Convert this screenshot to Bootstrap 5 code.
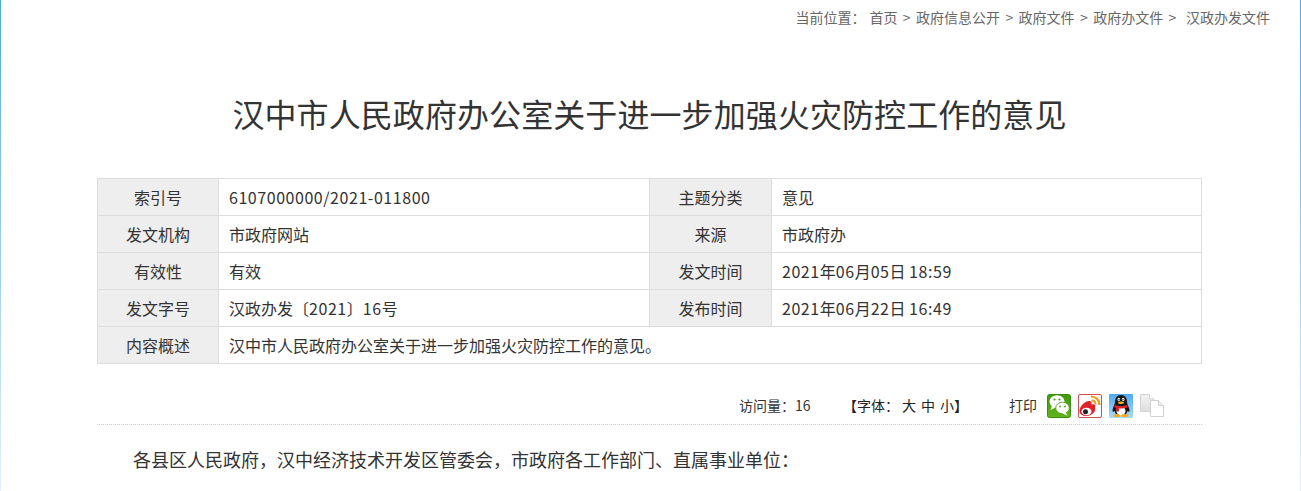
<!DOCTYPE html>
<html lang="zh-CN">
<head>
<meta charset="utf-8">
<title>汉中市人民政府办公室关于进一步加强火灾防控工作的意见</title>
<link href="https://cdn.jsdelivr.net/npm/bootstrap@5.3.0/dist/css/bootstrap.min.css" rel="stylesheet">
<style>
html,body{height:100%;overflow:hidden}
body{font-family:"Noto Sans CJK SC","Liberation Sans",sans-serif;color:#333;background:#fff}
.page-frame{height:491px;border-style:solid;border-width:0 1px;border-image:linear-gradient(#4aa8f2,#e4f2fc) 1;overflow:hidden}
.crumbs{height:35px;padding:5px 30px 0 0;font-size:14px;line-height:24px;color:#666}
.crumbs .sep{margin:0 5.4px}
.crumbs .here{margin-right:4px}
.crumbs .last{margin-left:4.300px}
.doc-title{font-size:32px;line-height:48px;font-weight:400;color:#333;margin:54px 2px 41px 0;text-align:center;letter-spacing:.08px}
.doc-wrap{width:1105px;margin-left:96px}
.meta-table{table-layout:fixed;width:1105px;margin:0;font-size:16px;--bs-table-color:#333;--bs-table-border-color:#ddd}
.meta-table td{height:37px;padding:0 10px;line-height:36px;border:1px solid #ddd;vertical-align:middle}
.meta-table td.lab{background:#eee;--bs-table-bg:#eee;text-align:center}
.meta-table .num{letter-spacing:.55px}
.meta-table .w-col1{width:121px}
.meta-table .w-col2{width:431px}
.meta-table .w-col3{width:122px}
.tools{height:61px;padding-top:30px;border-bottom:1px dotted #ccc;font-size:14px;line-height:22px;color:#333}
.t-visits{margin-left:642px;width:104px}
.t-font{width:166px;color:#222;white-space:nowrap}
.t-font .size-opt{margin-left:5px}
.t-font .size-opt:first-of-type{margin-left:3px}
.t-print{width:38px}
.tool-icons{gap:7px}
.tool-icons svg{display:block}
.doc-body{font-size:18px;line-height:32px;margin:18px 0 0;padding-left:36px;color:#333}
</style>
</head>
<body>
<div class="page-frame">
  <div class="crumbs d-flex justify-content-end">
    <span class="here">当前位置：</span><span>首页</span><span class="sep">&gt;</span><span>政府信息公开</span><span class="sep">&gt;</span><span>政府文件</span><span class="sep">&gt;</span><span>政府办文件</span><span class="sep">&gt;</span><span class="last">汉政办发文件</span>
  </div>
  <h1 class="doc-title">汉中市人民政府办公室关于进一步加强火灾防控工作的意见</h1>
  <div class="doc-wrap">
    <table class="table meta-table">
      <colgroup><col class="w-col1"><col class="w-col2"><col class="w-col3"><col></colgroup>
      <tbody>
        <tr><td class="lab">索引号</td><td><span class="num">6107000000/2021-011800</span></td><td class="lab">主题分类</td><td>意见</td></tr>
        <tr><td class="lab">发文机构</td><td>市政府网站</td><td class="lab">来源</td><td>市政府办</td></tr>
        <tr><td class="lab">有效性</td><td>有效</td><td class="lab">发文时间</td><td><span class="num">2021</span>年<span class="num">06</span>月<span class="num">05</span>日 <span class="num">18:59</span></td></tr>
        <tr><td class="lab">发文字号</td><td>汉政办发〔<span class="num">2021</span>〕<span class="num">16</span>号</td><td class="lab">发布时间</td><td><span class="num">2021</span>年<span class="num">06</span>月<span class="num">22</span>日 <span class="num">16:49</span></td></tr>
        <tr><td class="lab">内容概述</td><td colspan="3">汉中市人民政府办公室关于进一步加强火灾防控工作的意见。</td></tr>
      </tbody>
    </table>
    <div class="tools d-flex align-items-start">
      <span class="t-visits">访问量：16</span>
      <span class="t-font">【字体：<span class="size-opt">大</span><span class="size-opt">中</span><span class="size-opt">小</span>】</span>
      <span class="t-print">打印</span>
      <div class="tool-icons d-flex">
        <svg width="24" height="24" viewBox="0 0 24 24"><defs><linearGradient id="wg" x1="0" y1="0" x2="0" y2="1"><stop offset="0" stop-color="#3f9a0c"/><stop offset="1" stop-color="#62b41e"/></linearGradient></defs><rect x=".5" y=".5" width="23" height="23" rx="2" fill="url(#wg)" stroke="#3b8d0c"/><ellipse cx="10" cy="7.500" rx="7.500" ry="6.300" fill="#fff"/><path d="M5 11.500l-1.500 4.500 5-2.500z" fill="#fff"/><ellipse cx="15.500" cy="14" rx="6.800" ry="5.800" fill="#fff" stroke="#4a9f12" stroke-width=".8"/><path d="M18.500 18l2 3.500-5-2z" fill="#fff"/><circle cx="7.500" cy="5.500" r="1.100" fill="#4a9f12"/><circle cx="12.500" cy="5.500" r="1.100" fill="#4a9f12"/><circle cx="13" cy="12.500" r=".9" fill="#4a9f12"/><circle cx="18" cy="12.500" r=".9" fill="#4a9f12"/></svg>
        <svg width="24" height="24" viewBox="0 0 24 24"><rect x=".5" y=".5" width="23" height="23" rx="1.500" fill="#fff" stroke="#d4504c"/><path d="M1.500 17c0-4.500 5.500-10 9.500-10 2.500 0 3 1.800 2.300 3.600 3-1 5 .3 3.700 2.900 1.500 4-3.500 8.500-8.500 8.500-4 0-7-2-7-5z" fill="#e2202b"/><ellipse cx="8.500" cy="17.500" rx="5" ry="3.800" fill="#fff"/><circle cx="7.500" cy="17.800" r="2.500" fill="#222"/><path d="M13 2.500c5 0 8.500 3.500 8.500 8.500" fill="none" stroke="#f39a1d" stroke-width="2.200"/><path d="M13.500 6.500c2.500 0 4 1.500 4 4" fill="none" stroke="#f39a1d" stroke-width="2"/></svg>
        <svg width="24" height="24" viewBox="0 0 24 24"><defs><linearGradient id="qg" x1="0" y1="0" x2="0" y2="1"><stop offset="0" stop-color="#4fa9ec"/><stop offset="1" stop-color="#a9dcf8"/></linearGradient></defs><rect width="24" height="24" rx="1" fill="url(#qg)"/><path d="M12 1c4 0 6 3 6 7 0 2 2 5 2.500 8 .3 2-1 2-2 1-.5 2-1.500 3-2.500 4H8c-1-1-2-2-2.500-4-1 1-2.300 1-2-1C4 13 6 10 6 8c0-4 2-7 6-7z" fill="#161616"/><ellipse cx="12" cy="17" rx="4.500" ry="4.500" fill="#fff"/><ellipse cx="9.800" cy="5.500" rx="1.300" ry="1.800" fill="#fff"/><ellipse cx="14.200" cy="5.500" rx="1.300" ry="1.800" fill="#fff"/><circle cx="10" cy="5.800" r=".7" fill="#111"/><circle cx="14" cy="5.800" r=".7" fill="#111"/><ellipse cx="12" cy="8.800" rx="3" ry="1.300" fill="#f6b71e"/><path d="M5.500 11c4 1.500 9 1.500 13 0v2.500c-4 1.300-9 1.300-13 0z" fill="#e2202b"/><path d="M7 13h3v4.500H7.500z" fill="#e2202b"/><ellipse cx="8" cy="21.500" rx="3.500" ry="1.500" fill="#f6a81e"/><ellipse cx="16" cy="21.500" rx="3.500" ry="1.500" fill="#f6a81e"/></svg>
        <svg width="25" height="24" viewBox="0 0 25 24"><defs><linearGradient id="cg" x1="0" y1="0" x2="0" y2="1"><stop offset="0" stop-color="#f2f2f2"/><stop offset="1" stop-color="#dedede"/></linearGradient></defs><path d="M.5.500h9l4.500 4.500v12.500H.5z" fill="url(#cg)" stroke="#d4d4d4"/><path d="M9.500.500v4.500h4.500" fill="#fff" stroke="#d4d4d4"/><path d="M10.500 6.500h8l5 5v11h-13z" fill="#fff" stroke="#d0d0d0"/><path d="M18.500 6.500v5h5" fill="#ececec" stroke="#d0d0d0"/></svg>
      </div>
    </div>
    <p class="doc-body">各县区人民政府，汉中经济技术开发区管委会，市政府各工作部门、直属事业单位：</p>
  </div>
</div>
</body>
</html>
